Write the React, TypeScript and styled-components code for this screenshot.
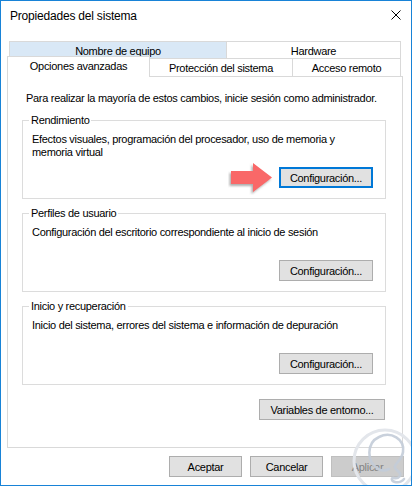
import * as React from 'react';
import styled, { createGlobalStyle, css } from 'styled-components';

const GlobalStyle = createGlobalStyle`
    html, body {
        margin: 0;
        padding: 0;
        background: #fff;
    }
    body {
        font-family: "Liberation Sans", Arial, sans-serif;
        font-size: 11px;
        letter-spacing: -0.3px;
        color: #000;
    }
`;

/////////////////////////////////////////////////////////////////////////////////////////////////
// Datos

const pestanasFondo = [
    { texto: 'Nombre de equipo', ancho: 218, resaltada: true },
    { texto: 'Hardware', ancho: 175, resaltada: false },
];

const pestanasFrente = [
    { texto: 'Opciones avanzadas', ancho: 143, elegida: true },
    { texto: 'Protección del sistema', ancho: 144, elegida: false },
    { texto: 'Acceso remoto', ancho: 109, elegida: false },
];

const grupos = [
    {
        titulo: 'Rendimiento',
        texto: 'Efectos visuales, programación del procesador, uso de memoria y memoria virtual',
        foco: true,
    },
    {
        titulo: 'Perfiles de usuario',
        texto: 'Configuración del escritorio correspondiente al inicio de sesión',
        foco: false,
    },
    {
        titulo: 'Inicio y recuperación',
        texto: 'Inicio del sistema, errores del sistema e información de depuración',
        foco: false,
    },
];

/////////////////////////////////////////////////////////////////////////////////////////////////
// Dibujos

const IconoCerrar = () => (
    <svg width="10" height="10" viewBox="0 0 10 10">
        <path d="M0.5 0.5 L9.5 9.5 M9.5 0.5 L0.5 9.5" stroke="#000" strokeWidth="1" fill="none" />
    </svg>
);

const Flecha = () => (
    <SvgFlecha width="46" height="34" viewBox="0 0 46 34">
        <defs>
            <filter id="sombra" x="-20%" y="-20%" width="140%" height="150%">
                <feDropShadow dx="-1.5" dy="2" stdDeviation="1.2" floodColor="#6b6b6b" floodOpacity="0.55" />
            </filter>
        </defs>
        <path d="M3 10 H25 V2 L44 16.5 L25 31 V23 H3 Z" fill="#f96767" filter="url(#sombra)" />
    </SvgFlecha>
);

const MarcaAgua = () => (
    <SvgMarca width="64" height="66" viewBox="0 0 64 66">
        <circle cx="38" cy="42" r="31" stroke="#e3e6eb" strokeWidth="3" fill="none" />
        <path
            d="M30 49 C20 43 19 24 32 18 C44 12 58 20 56 33 C55 40 50 43 48 47 C47 50 50 51 52 53 C55 56 52 60 47 59 C44 58 44 62 48 63 C52 64 56 62 57 60"
            stroke="#c3ccd8"
            strokeWidth="2.6"
            fill="none"
            strokeLinecap="round"
            opacity="0.9"
        />
        <path d="M30 49 C33 52 38 52 42 50" stroke="#c3ccd8" strokeWidth="2.6" fill="none" strokeLinecap="round" />
    </SvgMarca>
);

/////////////////////////////////////////////////////////////////////////////////////////////////
// Render

export default function App() {
    return (
        <>
            <GlobalStyle />
            <Ventana>
                <BarraTitulo>
                    <Titulo>Propiedades del sistema</Titulo>
                    <IconoCerrar />
                </BarraTitulo>
                <Cuerpo>
                    <FilaFondo>
                        {pestanasFondo.map((p) => (
                            <PestanaFondo key={p.texto} ancho={p.ancho} resaltada={p.resaltada}>
                                {p.texto}
                            </PestanaFondo>
                        ))}
                    </FilaFondo>
                    <FilaFrente>
                        {pestanasFrente.map((p) => (
                            <PestanaFrente key={p.texto} ancho={p.ancho} elegida={p.elegida}>
                                {p.texto}
                            </PestanaFrente>
                        ))}
                    </FilaFrente>
                    <Panel>
                        <Texto>Para realizar la mayoría de estos cambios, inicie sesión como administrador.</Texto>
                        <ListaGrupos>
                            {grupos.map((g) => (
                                <Grupo key={g.titulo}>
                                    <Leyenda>{g.titulo}</Leyenda>
                                    <Descripcion>{g.texto}</Descripcion>
                                    <FilaBoton>
                                        {g.foco && <Flecha />}
                                        <Boton ancho={94} foco={g.foco}>Configuración...</Boton>
                                    </FilaBoton>
                                </Grupo>
                            ))}
                        </ListaGrupos>
                        <FilaVariables>
                            <Boton ancho={126}>Variables de entorno...</Boton>
                        </FilaVariables>
                    </Panel>
                    <Pie>
                        <Boton ancho={73}>Aceptar</Boton>
                        <Boton ancho={73}>Cancelar</Boton>
                        <Boton ancho={73} desactivado>Aplicar</Boton>
                    </Pie>
                </Cuerpo>
                <MarcaAgua />
            </Ventana>
        </>
    );
}

/////////////////////////////////////////////////////////////////////////////////////////////////
// Estilos

const Ventana = styled.div`
    position: relative;
    width: 412px;
    height: 486px;
    box-sizing: border-box;
    border: 1px solid #1883d7;
    background: #fff;
    overflow: hidden;
    display: flex;
    flex-direction: column;
`;

const BarraTitulo = styled.div`
    height: 30px;
    flex: 0 0 30px;
    display: flex;
    align-items: center;
    justify-content: space-between;
    padding: 0 10px 0 9px;
    svg {
        margin-top: -2px;
    }
`;

const Titulo = styled.span`
    font-size: 12px;
    letter-spacing: -0.2px;
`;

const Cuerpo = styled.div`
    padding: 10px 8px 0 6px;
    display: flex;
    flex-direction: column;
`;

const FilaFondo = styled.div`
    display: flex;
    height: 17px;
    padding-left: 2px;
`;

const PestanaFondo = styled.div`
    box-sizing: border-box;
    width: ${({ ancho }) => ancho}px;
    height: 17px;
    border: 1px solid #d9d9d9;
    border-bottom: none;
    background: ${({ resaltada }) => (resaltada ? '#d9e8f6' : '#fff')};
    display: flex;
    align-items: center;
    justify-content: center;
    padding-top: 1px;
    & + & {
        margin-left: -1px;
    }
`;

const FilaFrente = styled.div`
    display: flex;
    align-items: flex-end;
    height: 20px;
    margin-top: -2px;
`;

const PestanaFrente = styled.div`
    position: relative;
    box-sizing: border-box;
    width: ${({ ancho }) => ancho}px;
    height: 18px;
    border: 1px solid #d9d9d9;
    border-bottom: none;
    background: #fff;
    display: flex;
    align-items: center;
    justify-content: center;
    padding-top: 1px;
    & + & {
        margin-left: -1px;
    }

    ${({ elegida }) =>
        elegida &&
        css`
            z-index: 1;
            height: 21px;
            margin-bottom: -1px;
            padding-top: 0;
            padding-bottom: 2px;
        `}
`;

const Panel = styled.div`
    box-sizing: border-box;
    height: 372px;
    border: 1px solid #d9d9d9;
    padding: 15px 16px 0 14px;
    display: flex;
    flex-direction: column;
`;

const Texto = styled.div`
    line-height: 13px;
    padding-left: 4px;
`;

const ListaGrupos = styled.div`
    margin-top: 15px;
    display: flex;
    flex-direction: column;
    gap: 14px;
`;

const Grupo = styled.div`
    box-sizing: border-box;
    height: 79px;
    border: 1px solid #dcdcdc;
    padding: 0 12px 10px 9px;
    display: flex;
    flex-direction: column;
`;

const Leyenda = styled.span`
    align-self: flex-start;
    margin: -7px 0 0 -3px;
    padding: 0 2px;
    background: #fff;
    line-height: 13px;
`;

const Descripcion = styled.div`
    margin-top: 6px;
    line-height: 13px;
    padding-right: 10px;
`;

const FilaBoton = styled.div`
    margin-top: auto;
    display: flex;
    justify-content: flex-end;
    align-items: center;
    gap: 5px;
`;

const SvgFlecha = styled.svg`
    display: block;
    margin: -6px 0 -7px 0;
`;

const FilaVariables = styled.div`
    margin-top: 14px;
    display: flex;
    justify-content: flex-end;
    padding-right: 1px;
`;

const Pie = styled.div`
    margin-top: 8px;
    margin-right: -1px;
    display: flex;
    justify-content: flex-end;
    gap: 8px;
`;

const Boton = styled.div`
    box-sizing: border-box;
    width: ${({ ancho }) => ancho}px;
    height: 21px;
    border: 1px solid #adadad;
    background: #e1e1e1;
    display: flex;
    align-items: center;
    justify-content: center;
    white-space: nowrap;

    ${({ foco }) =>
        foco &&
        css`
            border: 2px solid #0078d7;
        `}

    ${({ desactivado }) =>
        desactivado &&
        css`
            border-color: #bfbfbf;
            background: #cccccc;
            color: #838383;
        `}
`;

const SvgMarca = styled.svg`
    position: absolute;
    right: 0;
    bottom: 0;
    pointer-events: none;
`;
